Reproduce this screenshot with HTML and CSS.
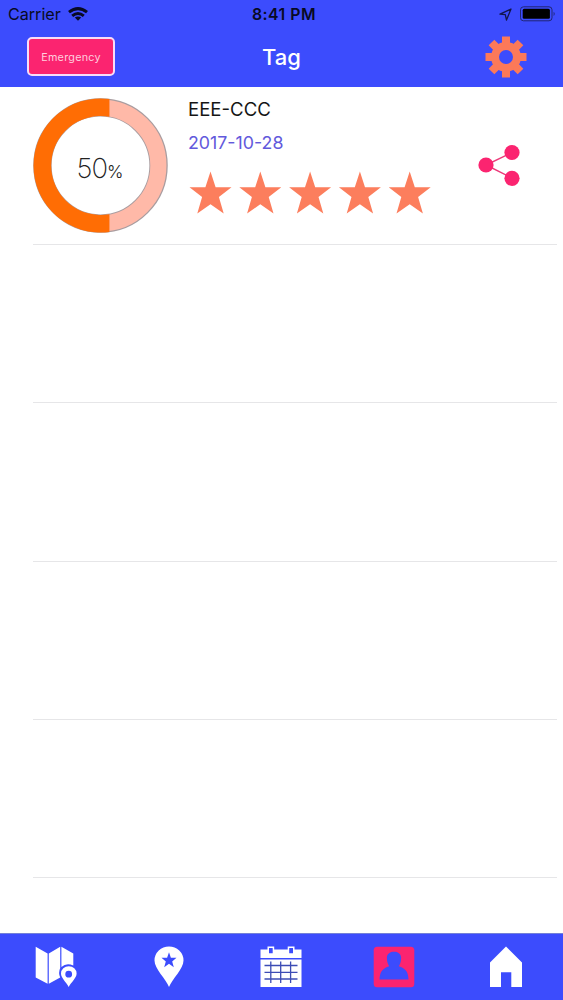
FILE: index.html
```html
<!DOCTYPE html>
<html lang="en">
<head>
<meta charset="utf-8">
<title>Tag</title>
<link rel="stylesheet" href="styles.css">
</head>
<body>
<div class="app">
  <header class="header">
    <div class="status">
      <div class="status-left">
        <span class="carrier">Carrier</span>
        <svg class="wifi" width="20" height="14" viewBox="0 0 20 14">
          <g fill="none" stroke="#080a24" stroke-width="3"><path d="M1 5.2Q10-2 19 5.2"/><path d="M4.2 8.8Q10 4.1 15.8 8.8"/></g>
          <path d="M6.8 10.6Q10 8.3 13.2 10.6L10 13.7Z" fill="#080a24"/>
        </svg>
      </div>
      <span class="clock">8:41 PM</span>
      <div class="status-right">
        <svg width="13" height="13" viewBox="0 0 13 13"><path d="M12 1L1 6.2L6.3 6.7L7.5 12Z" fill="none" stroke="#11154a" stroke-width="1.3" stroke-linejoin="round"/></svg>
        <svg width="36" height="16" viewBox="0 0 36 16"><rect x=".5" y=".8" width="31.5" height="14" rx="3" fill="none" stroke="#202676"/><rect x="2.7" y="2.8" width="27.2" height="10" rx="1.5" fill="#000"/><path d="M33.6 5.7Q35.8 7.8 33.6 10Z" fill="#202676"/></svg>
      </div>
    </div>
    <div class="nav">
      <button class="emergency">Emergency</button>
      <h1 class="title">Tag</h1>
      <svg class="gear" width="42" height="42" viewBox="-21 -21 42 42" fill="#fc7959">
        <circle r="11" fill="none" stroke="#fc7959" stroke-width="8"/>
        <g id="teeth"><path d="M-4-13V-20.5H4V-13ZM-4 13V20.5H4V13ZM-13-4H-20.5V4H-13ZM13-4H20.5V4H13Z"/></g>
        <use href="#teeth" transform="rotate(45)"/>
      </svg>
    </div>
  </header>
  <main class="list">
    <section class="row entry">
      <div class="progress">
        <svg class="ring" width="135" height="135" viewBox="0 0 136 136">
          <circle cx="68" cy="68" r="58.5" fill="none" stroke="#a99da0" stroke-width="18.5"/>
          <circle cx="68" cy="68" r="58.3" fill="none" stroke="#ffb9a8" stroke-width="16.3"/>
          <path d="M77 1.1A67.5 67.5 0 1 0 77 134.9V117A49.8 49.8 0 1 1 77 19Z" fill="#ff6d04"/>
        </svg>
        <div class="value"><span class="number">50</span><span class="percent">%</span></div>
      </div>
      <div class="details">
        <div class="name">EEE-CCC</div>
        <div class="date">2017-10-28</div>
        <svg class="stars" width="243" height="44" viewBox="0 0 243 44" fill="#fc7e5d">
          <path id="star" d="M21.5 0.5L26.6 16.2H42.5L29.9 26L34.7 42.5L21.5 33.2L8.3 42.5L13.1 26L.5 16.2H16.4Z"/>
          <use href="#star" x="49.8"/><use href="#star" x="99.6"/><use href="#star" x="149.4"/><use href="#star" x="199.2"/>
        </svg>
      </div>
      <svg class="share" width="42" height="42" viewBox="0 0 42 42" fill="#fb2470"><path d="M34 8.5L8 21L34 34" fill="none" stroke="#ec3979" stroke-width="1.5"/><circle cx="34" cy="8.5" r="7.6"/><circle cx="8" cy="21" r="7.6"/><circle cx="34" cy="34.3" r="7.6"/></svg>
    </section>
    <div class="row"></div>
    <div class="row"></div>
    <div class="row"></div>
    <div class="row"></div>
  </main>
  <nav class="tabs">
    <a class="tab"><svg width="42" height="42" viewBox="0 0 42 42"><path fill="#fff" d="M.7 .7L12.6 7.4V37.8L.7 31.5ZM13.8 7.4L25.2 .7V22Q23 27 25.2 31.5L13.8 37.8ZM26.4 .7L38.3 7.4V19.6Q31.5 16.5 26.4 21Z"/><path fill="#fff" fill-rule="evenodd" d="M33.7 41C31 36 26 32 26 27.6A7.8 7.4 0 0 1 41.6 27.6C41.6 32 36.5 36 33.7 41ZM33.7 24.8A3.4 3.4 0 1 0 33.7 31.6A3.4 3.4 0 1 0 33.7 24.8Z"/></svg></a>
    <a class="tab"><svg width="42" height="42" viewBox="0 0 42 42"><path fill="#fff" d="M21 41C18 33 6.5 23 6.5 14.5A14.5 14 0 0 1 35.5 14.5C35.5 23 24 33 21 41Z"/><path fill="#3c4cfd" d="M21 6.2L22.9 11.8H28.5L24.2 15.5L25.8 21.3L21 17.8L16.2 21.3L17.8 15.5L13.5 11.8H19.1Z"/></svg></a>
    <a class="tab"><svg width="42" height="42" viewBox="0 0 42 42"><path fill="#fff" d="M.5 3.5H7.5V.5H14.2V3.5H27.7V.5H34.5V3.5H41.5V12H.5ZM.5 13.5H41.5V41H.5Z"/><path fill="#3c4cfd" d="M9 2H12.7V7.3H9ZM29.2 2H33V7.3H29.2Z"/><path d="M4.5 19.5H37.5M4.5 26.3H37.5M4.5 33H37.5M10.8 15.5V37M20.7 15.5V37M30.6 15.5V37" fill="none" stroke="#3c4cb5" stroke-width="1.3"/></svg></a>
    <a class="tab tab-person"><svg width="42" height="42" viewBox="0 0 42 42"><rect x=".7" y=".7" width="40.6" height="40.6" rx="3.5" fill="#fb2470"/><path fill="#3c4cfd" d="M6.5 33.5C7 25 10 22.5 16.2 20.3C14.8 18 13.8 15.5 13.9 11.5C14 3.8 28 3.8 28.1 11.5C28.2 15.5 27.2 18 25.8 20.3C32 22.5 35.2 25 35.5 33.5Z"/></svg></a>
    <a class="tab tab-home"><svg width="42" height="42" viewBox="0 0 42 42"><path fill="#fff" d="M21 .5L37 16.5V41H26.3V26.3H16V41H5V16.5Z"/></svg></a>
  </nav>
</div>
</body>
</html>
```
FILE: styles.css
```css
* { box-sizing: border-box; }
body { margin: 0; background: #fff; font-family: Inter, "Liberation Sans", sans-serif; }
svg { display: block; flex: none; }
.app { width: 563px; height: 1000px; display: flex; flex-direction: column; }
.header { height: 87px; background: #3c4cfd; }
.status { height: 28px; padding: 0 7px 0 8px; display: grid; grid-template-columns: 1fr auto 1fr; align-items: center; color: #080a24; }
.status-left, .status-right { display: flex; align-items: center; }
.status-left { gap: 7px; }
.status-right { justify-content: flex-end; gap: 8px; }
.carrier { font-size: 16.2px; letter-spacing: -.05px; }
.clock { margin-left: 4px; font-size: 15.8px; font-weight: 600; letter-spacing: .5px; }
.nav { height: 57px; padding: 0 36px 0 27px; display: grid; grid-template-columns: 1fr auto 1fr; align-items: center; }
.emergency { width: 88px; height: 39px; padding: 1px 0 0; border: 2px solid #f8dcf7; border-radius: 5px; background: #fb2470; color: #ffcede; font-family: inherit; font-size: 10.8px; letter-spacing: .25px; }
.title { margin: 1px 0 0 9px; color: #fff; font-size: 22px; line-height: 30px; font-weight: 500; }
.gear { justify-self: end; }
.list { flex: 1; padding: 0 6px 0 33px; }
.row { height: 158.2px; border-bottom: 1px solid #e6e6e8; }
.entry { display: flex; }
.progress { width: 135px; margin-top: 11px; display: grid; height: 135px; place-items: center; }
.ring, .value { grid-area: 1 / 1; }
.value { color: #222; font-weight: 200; white-space: nowrap; margin: 4px 2px 0 0; }
.number { font-size: 27.5px; letter-spacing: -1px; }
.percent { font-size: 17.5px; font-weight: 300; letter-spacing: -1px; }
.details { width: 243px; margin-left: 20px; padding-top: 10px; }
.name { height: 25px; line-height: 25px; color: #151515; font-size: 18.6px; }
.date { height: 25px; line-height: 25px; margin-top: 8px; color: #6259dc; font-size: 17.8px; }
.stars { margin: 16px 0 0 1px; }
.share { margin: 57px 0 0 47px; }
.tabs { height: 67px; background: #3c4cfd; border-top: 1px solid #7380d8; display: grid; grid-template-columns: repeat(5, 1fr); }
.tab { padding-top: 12px; display: flex; justify-content: center; }
.tab-person { padding-right: 1px; }
.tab-home { padding-right: 2px; }
```
